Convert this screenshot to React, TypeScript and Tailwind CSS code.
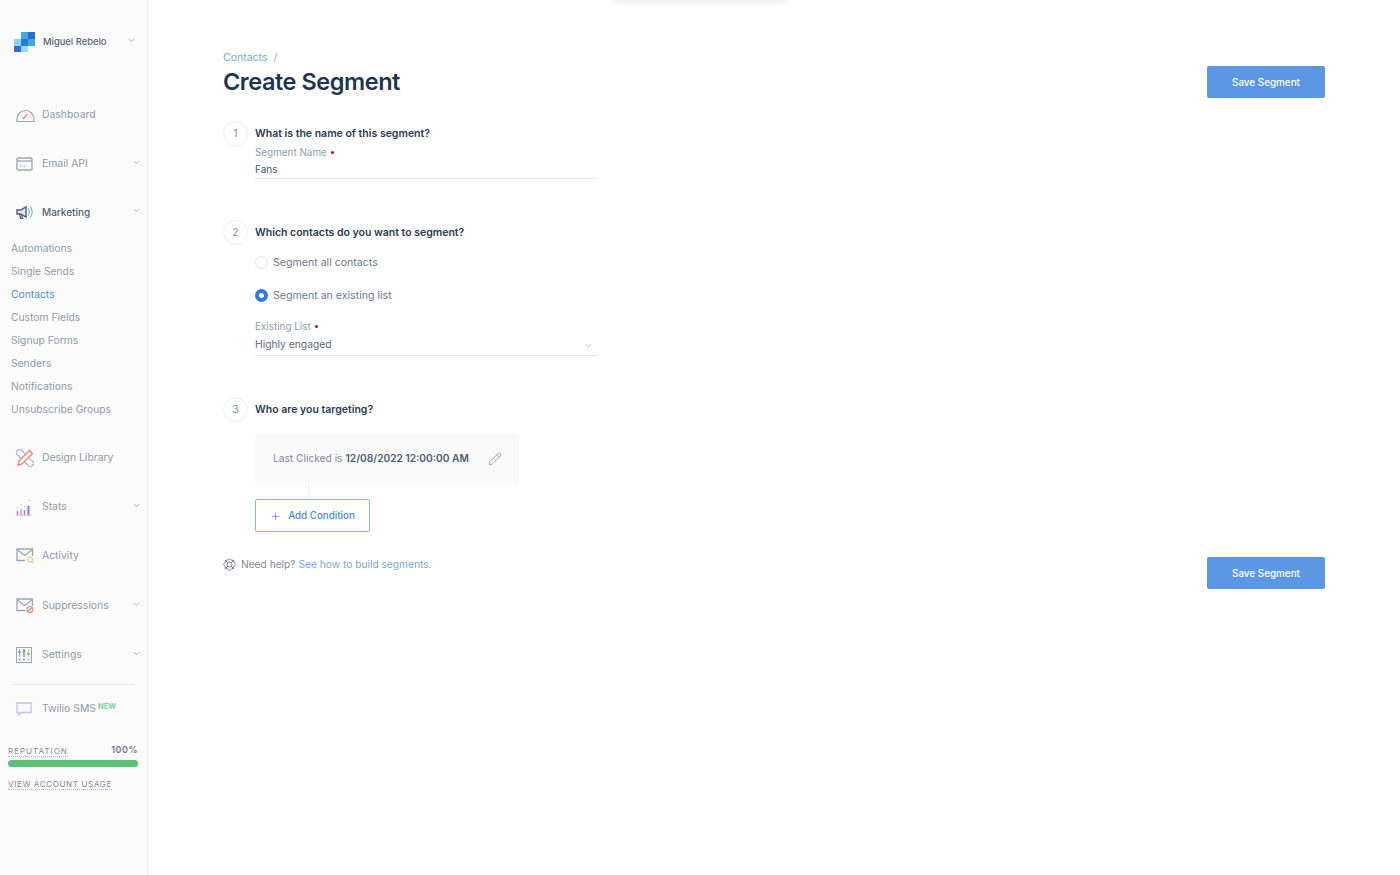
import { ChevronDown, Pencil, Plus } from 'lucide-react';
import type { ReactNode } from 'react';

const Chevron = ({ className }: { className: string }) => (
  <ChevronDown size={9} strokeWidth={2} className={className} />
);

const Logo = () => (
  <svg width="21" height="20" viewBox="0 0 21 20">
    <rect x="0" y="7" width="7" height="7" fill="#8fd6ef" />
    <rect x="7" y="0" width="7" height="7" fill="#3fa9e0" />
    <rect x="14" y="0" width="7" height="7" fill="#2a6fd0" />
    <rect x="7" y="7" width="7" height="7" fill="#2a7ad4" />
    <rect x="14" y="7" width="7" height="7" fill="#3fa9e0" />
    <rect x="0" y="14" width="7" height="6" fill="#2a6fd0" />
    <rect x="7" y="14" width="7" height="6" fill="#9adcf2" />
  </svg>
);

const DashboardIcon = () => (
  <svg width="19" height="15" viewBox="0 0 19 15" fill="none">
    <path d="M1 13.500V11a8.500 8.500 0 0 1 17 0v2.500z" stroke="#9aa6b6" strokeWidth="1.200" />
    <path d="M7 11l4.500-5" stroke="#e9866f" strokeWidth="1.300" />
    <path d="M9.500 3.500v1.500M4 6.500l1 1M15 6.500l-1 1" stroke="#f1c777" strokeWidth="1" />
  </svg>
);

const EmailApiIcon = () => (
  <svg width="17" height="14" viewBox="0 0 17 14" fill="none">
    <rect x="1" y="1" width="15" height="12" rx="1" stroke="#9aa6b6" strokeWidth="1.300" />
    <path d="M1 4h15" stroke="#9aa6b6" strokeWidth="1.300" />
    <path d="M4 7l1.500 1.500L4 10" stroke="#7fd1a6" strokeWidth="0.900" />
    <path d="M7 9h3" stroke="#8fb8e8" strokeWidth="0.900" />
  </svg>
);

const MarketingIcon = () => (
  <svg width="17" height="15" viewBox="0 0 17 15" fill="none">
    <path d="M1 5h3.500L10 2v10L4.500 9H1z" fill="#dfe5ee" stroke="#4d5d75" strokeWidth="1.400" />
    <path d="M3.500 9l1 4.500h2L5.500 9.500" stroke="#4d5d75" strokeWidth="1.200" />
    <path d="M12 3.500a5 5 0 0 1 0 7" stroke="#6cc7a0" strokeWidth="1.100" />
    <path d="M14 1.500a8 8 0 0 1 0 11" stroke="#6cc7a0" strokeWidth="1.100" />
  </svg>
);

const DesignIcon = () => (
  <svg width="18" height="18" viewBox="0 0 18 18" fill="none">
    <rect x="-1.500" y="6" width="21" height="6" transform="rotate(45 9 9)" stroke="#a4aebb" strokeWidth="1.100" />
    <path d="M2 16l1-4L13.500 1.500l3 3L6 15z" fill="#fbfbfc" stroke="#e9866f" strokeWidth="1.300" />
  </svg>
);

const StatsIcon = () => (
  <svg width="16" height="17" viewBox="0 0 16 17" fill="none">
    <path d="M0 16.500h16" stroke="#d7c6ea" strokeWidth="1" />
    <path d="M1.500 16v-4" stroke="#e66fa8" strokeWidth="1.500" />
    <path d="M5 16v-6" stroke="#c79be0" strokeWidth="1.500" />
    <path d="M8.500 16v-5" stroke="#9c8be6" strokeWidth="1.500" />
    <path d="M12.500 16V7" stroke="#9d6fdc" strokeWidth="2" />
    <path d="M2 8.500v.8M5.500 5.500v.8M8.500 7v.8M13 1v1" stroke="#8896a8" strokeWidth="1.100" />
  </svg>
);

const EnvelopeBase = ({ children }: { children: ReactNode }) => (
  <svg width="18" height="16" viewBox="0 0 18 16" fill="none">
    <path d="M9 12.500H1V1h15.500v7" stroke="#9aa6b6" strokeWidth="1.300" />
    <path d="M1 1.500l7.700 6 7.800-6" stroke="#9aa6b6" strokeWidth="1.300" />
    {children}
  </svg>
);

const SettingsIcon = () => (
  <svg width="16" height="16" viewBox="0 0 16 16" fill="none">
    <rect x="0.500" y="0.500" width="15" height="15" stroke="#9aa6b6" />
    <path d="M3.500 2v8" stroke="#76c79a" strokeWidth="1.200" />
    <path d="M8 2v8" stroke="#6b7c90" strokeWidth="1.200" />
    <path d="M12.500 2v8" stroke="#e7c66a" strokeWidth="1.200" />
    <path d="M2 5h3M6.500 4h3M11 7h3" stroke="#6b7c90" />
    <rect x="2.500" y="11.500" width="2" height="2" fill="#8fa0e0" />
    <rect x="7" y="11.500" width="2" height="2" fill="#8fa0e0" />
    <rect x="11.500" y="11.500" width="2" height="2" fill="#8fd6e0" />
  </svg>
);

const SmsIcon = () => (
  <svg width="16" height="14" viewBox="0 0 16 14" fill="none">
    <path d="M1 1h14v9.500H5.500L3 13v-2.500H1z" stroke="#c9bdf0" strokeWidth="1.300" />
  </svg>
);

const HelpIcon = () => (
  <svg width="13" height="13" viewBox="0 0 13 13" fill="none" stroke="#66758a" strokeWidth="0.900">
    <circle cx="6.500" cy="6.500" r="2.500" />
    <path d="M6.500 0.500L8.900 2.300 10.700 2.300 10.700 4.100 12.500 6.500 10.700 8.900 10.700 10.700 8.900 10.700 6.500 12.500 4.100 10.700 2.300 10.700 2.300 8.900 0.500 6.500 2.300 4.100 2.300 2.300 4.100 2.300z" />
    <path d="M2.500 2.500l2.200 2.200M10.500 2.500L8.300 4.700M2.500 10.500l2.200-2.200M10.500 10.500L8.300 8.300" />
  </svg>
);

const NavItem = ({
  icon,
  label,
  caret,
  dark,
  badge,
  className,
}: {
  icon: ReactNode;
  label: string;
  caret?: boolean;
  dark?: boolean;
  badge?: boolean;
  className: string;
}) => (
  <div className={`flex h-5 items-center pl-[16px] pr-[6px] ${className}`}>
    <span className="flex w-[26px] shrink-0 items-center justify-start">{icon}</span>
    <span className={dark ? 'text-[10px] font-medium text-[#546378]' : 'text-[10.400px] text-[#8e9bab]'}>{label}</span>
    {badge && <span className="mb-[4px] ml-[2px] text-[7.500px] font-bold text-[#7fd3a2]">NEW</span>}
    {caret && <Chevron className="ml-auto mb-[3px] text-[#8e9bab]" />}
  </div>
);

const subItems = [
  'Automations',
  'Single Sends',
  'Contacts',
  'Custom Fields',
  'Signup Forms',
  'Senders',
  'Notifications',
  'Unsubscribe Groups',
];

const Sidebar = () => (
  <aside className="flex h-[875px] w-[148px] shrink-0 flex-col border-r border-[#f0f1f3] bg-[#fbfbfc]">
    <div className="mt-[32px] flex h-5 items-center pl-[14px] pr-[11px]">
      <Logo />
      <span className="ml-[8px] text-[9.400px] font-medium text-[#546378]">Miguel Rebelo</span>
      <Chevron className="ml-auto mb-[3px] text-[#8e9bab]" />
    </div>
    <NavItem className="mt-[53px]" icon={<DashboardIcon />} label="Dashboard" />
    <NavItem className="mt-[29px]" icon={<EmailApiIcon />} label="Email API" caret />
    <NavItem className="mt-[28px]" icon={<MarketingIcon />} label="Marketing" caret dark />
    <div className="mt-[15px] flex flex-col">
      {subItems.map((item) => (
        <div
          key={item}
          className={`flex h-[23px] items-center pl-[11px] text-[10.300px] ${
            item === 'Contacts' ? 'text-[#4f8fdc]' : 'text-[#8e9bab]'
          }`}
        >
          {item}
        </div>
      ))}
    </div>
    <NavItem className="mt-[27px]" icon={<DesignIcon />} label="Design Library" />
    <NavItem className="mt-[29px]" icon={<StatsIcon />} label="Stats" caret />
    <NavItem
      className="mt-[29px]"
      icon={
        <EnvelopeBase>
          <circle cx="14" cy="11.500" r="2.500" fill="#fbfbfc" stroke="#f1c777" strokeWidth="1.100" />
          <path d="M15.800 13.300l1.700 1.700" stroke="#f1c777" strokeWidth="1.100" />
        </EnvelopeBase>
      }
      label="Activity"
    />
    <NavItem
      className="mt-[30px]"
      icon={
        <EnvelopeBase>
          <circle cx="14" cy="11.500" r="3" fill="#fbfbfc" stroke="#e9866f" strokeWidth="1.100" />
          <path d="M12 13.500l4-4" stroke="#e9866f" strokeWidth="1.100" />
        </EnvelopeBase>
      }
      label="Suppressions"
      caret
    />
    <NavItem className="mt-[29px]" icon={<SettingsIcon />} label="Settings" caret />
    <div className="mx-[12px] mt-[19px] h-px bg-[#e9ebee]" />
    <NavItem className="mt-[14px]" icon={<SmsIcon />} label="Twilio SMS" badge />
    <div className="mt-[25px] px-[8px]">
      <div className="flex items-end justify-between pr-[1px]">
        <span className="border-b border-dotted border-[#a9b3c0] text-[8px] leading-[10px] tracking-[1px] text-[#7d8b9d]">
          REPUTATION
        </span>
        <span className="pb-[2px] text-[9px] font-semibold leading-[11px] tracking-[0.500px] text-[#6b7a8d]">100%</span>
      </div>
      <div className="mt-[3px] h-[6.500px] w-[130px] rounded-full bg-[#5cc177]" />
      <div className="mt-[2px]">
        <span className="border-b border-dotted border-[#a9b3c0] text-[8px] leading-[10px] tracking-[0.650px] text-[#7d8b9d]">
          VIEW ACCOUNT USAGE
        </span>
      </div>
    </div>
  </aside>
);

const SaveButton = () => (
  <button className="h-8 w-[118px] rounded-[2px] bg-[#5b97e2] text-[9.900px] font-medium text-white">Save Segment</button>
);

const Step = ({ n, title }: { n: number; title: string }) => (
  <div className="flex h-[25px] items-center">
    <span className="flex h-[25px] w-[25px] items-center justify-center rounded-full border border-[#eceef0] text-[10.500px] text-[#7f8b9b]">
      {n}
    </span>
    <span className="ml-[7px] text-[10.500px] font-semibold text-[#2a3b52]">{title}</span>
  </div>
);

const Required = ({ label }: { label: string }) => (
  <div className="flex h-[14px] items-center text-[9.900px] text-[#8e9bab]">
    {label}
    <span className="ml-[4px] h-[3px] w-[3px] rounded-full bg-[#b5121b]" />
  </div>
);

const Radio = ({ checked, label }: { checked?: boolean; label: string }) => (
  <div className="flex h-[14px] items-center">
    {checked ? (
      <span className="flex h-[13px] w-[13px] items-center justify-center rounded-full bg-[#2f7ade]">
        <span className="h-[5px] w-[5px] rounded-full bg-white" />
      </span>
    ) : (
      <span className="h-[13px] w-[13px] rounded-full border border-[#dfe2e6] bg-white" />
    )}
    <span className="ml-[5px] pt-[2px] text-[10.600px] text-[#6b7a8d]">{label}</span>
  </div>
);

export default function App() {
  return (
    <div
      className="relative flex h-[875px] w-[1400px] overflow-hidden bg-white"
      style={{ fontFamily: 'Inter, "Liberation Sans", sans-serif' }}
    >
      {/* toast shadow peeking in at the top */}
      <div className="absolute left-[612px] top-[-20px] h-[20px] w-[176px] shadow-[0_0_8px_rgba(0,0,0,0.12)]" />
      <Sidebar />
      <main className="flex flex-1 flex-col pl-[75px] pr-[75px] pt-[50px]">
        <div className="flex items-start justify-between">
          <div>
            <div className="flex h-[14px] items-center pt-[2px] text-[10.500px] text-[#75a8e8]">
              Contacts <span className="ml-[6px] text-[#a3adb9]">/</span>
            </div>
            <h1 className="mt-[3px] text-[23.500px] font-semibold leading-[30px] tracking-[-0.450px] text-[#1d3553]">
              Create Segment
            </h1>
          </div>
          <div className="pt-[16px]">
            <SaveButton />
          </div>
        </div>

        <div className="mt-[23px]">
          <Step n={1} title="What is the name of this segment?" />
          <div className="-mt-px ml-[32px] w-[342px]">
            <Required label="Segment Name" />
            <div className="mt-[4px] flex h-[16px] items-center border-b border-[#e3e6ea] pb-[2px] text-[10px] text-[#47556a]">
              Fans
            </div>
          </div>
        </div>

        <div className="mt-[41px]">
          <Step n={2} title="Which contacts do you want to segment?" />
          <div className="ml-[32px] w-[343px]">
            <div className="mt-[10px]">
              <Radio label="Segment all contacts" />
            </div>
            <div className="mt-[19px]">
              <Radio checked label="Segment an existing list" />
            </div>
            <div className="mt-[17px]">
              <Required label="Existing List" />
            </div>
            <div className="mt-[3px] flex h-[20px] items-center justify-between border-b border-[#e3e6ea] pb-[1px] pr-[5px] text-[10.300px] text-[#5c6a7d]">
              Highly engaged
              <Chevron className="text-[#9aa5b3]" />
            </div>
          </div>
        </div>

        <div className="mt-[41px]">
          <Step n={3} title="Who are you targeting?" />
          <div className="relative ml-[32px] mt-[12px] flex h-[49px] w-[264px] items-center bg-[#fafafa] pl-[18px] text-[10.200px] text-[#7f8b9b]">
            Last Clicked is
            <span className="ml-[3px] font-semibold text-[#4e5d72]">12/08/2022 12:00:00 AM</span>
            <Pencil size={14} strokeWidth={1.200} className="ml-[19px] text-[#7f8b9b]" />
          </div>
          <div className="ml-[85px] h-[16px] w-px bg-[#eceef0]" />
          <button className="ml-[32px] flex h-[33px] w-[115px] items-center justify-center rounded-[2px] border border-[#8db5ec] bg-white pt-[2px] text-[9.800px] font-medium text-[#4a8ae0]">
            <Plus size={11} strokeWidth={1.500} className="mr-[7px]" />
            Add Condition
          </button>
        </div>

        <div className="mt-[25px] flex items-start justify-between">
          <div className="flex h-[14px] items-center text-[10.200px] text-[#7f8b9b]">
            <HelpIcon />
            <span className="ml-[5px] pt-[2px]">Need help?</span>
            <span className="ml-[3px] pt-[2px] text-[#75a8e8]">See how to build segments.</span>
          </div>
          <SaveButton />
        </div>
      </main>
    </div>
  );
}
